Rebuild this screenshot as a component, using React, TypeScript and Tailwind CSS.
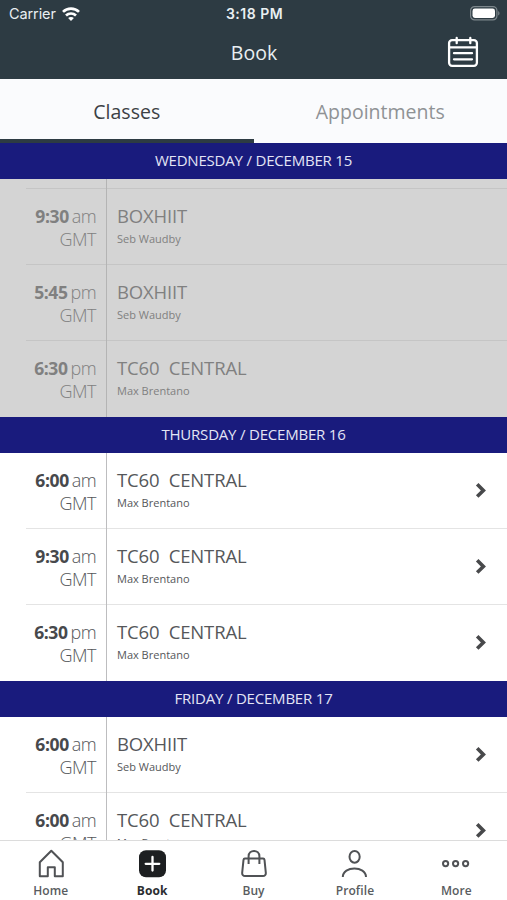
import * as React from 'react';
import { clsx } from 'clsx';

interface ClassItem {
  time: string;
  period: 'am' | 'pm';
  title: string;
  coach: string;
}

interface Day {
  label: string;
  past?: boolean;
  items: ClassItem[];
}

const DAYS: Day[] = [
  {
    label: 'WEDNESDAY / DECEMBER 15',
    past: true,
    items: [
      { time: '9:30', period: 'am', title: 'BOXHIIT', coach: 'Seb Waudby' },
      { time: '5:45', period: 'pm', title: 'BOXHIIT', coach: 'Seb Waudby' },
      { time: '6:30', period: 'pm', title: 'TC60  CENTRAL', coach: 'Max Brentano' },
    ],
  },
  {
    label: 'THURSDAY / DECEMBER 16',
    items: [
      { time: '6:00', period: 'am', title: 'TC60  CENTRAL', coach: 'Max Brentano' },
      { time: '9:30', period: 'am', title: 'TC60  CENTRAL', coach: 'Max Brentano' },
      { time: '6:30', period: 'pm', title: 'TC60  CENTRAL', coach: 'Max Brentano' },
    ],
  },
  {
    label: 'FRIDAY / DECEMBER 17',
    items: [
      { time: '6:00', period: 'am', title: 'BOXHIIT', coach: 'Seb Waudby' },
      { time: '6:00', period: 'am', title: 'TC60  CENTRAL', coach: 'Max Brentano' },
    ],
  },
];

const NAV = ['Home', 'Book', 'Buy', 'Profile', 'More'] as const;
type NavName = (typeof NAV)[number];

function WifiIcon() {
  return (
    <svg width="18" height="14" viewBox="0 0 18 14" fill="none" stroke="#fff" strokeWidth="2.7">
      <path d="M1 4.9C5.4.6 12.6.6 17 4.9" />
      <path d="M4 8.5c2.8-2.7 7.2-2.7 10 0" />
      <path d="M9 13.9 6.1 11c1.6-1.5 4.2-1.5 5.8 0z" fill="#fff" stroke="none" />
    </svg>
  );
}

function BatteryIcon() {
  return (
    <svg width="30" height="15" viewBox="0 0 30 15" fill="none">
      <rect x="0.6" y="0.6" width="26.3" height="13.3" rx="4" stroke="#7d878c" strokeWidth="1.2" />
      <rect x="2.5" y="2.5" width="22.5" height="9.5" rx="2.4" fill="#fff" />
      <path d="M28.2 5v4.6c1.8-.9 1.8-3.7 0-4.6z" fill="#7d878c" />
    </svg>
  );
}

function CalendarIcon() {
  return (
    <svg width="32" height="32" viewBox="0 0 32 32" fill="none" stroke="#fff" strokeWidth="2.3" strokeLinecap="round">
      <rect x="2.1" y="4.1" width="27.8" height="25.7" rx="3" />
      <path d="M2.1 11.3h27.8M9.7 2v5.2M23.3 2v5.2M7 17.2h18M7 23.3h18" />
    </svg>
  );
}

function NavIcon({ name }: { name: NavName }) {
  return (
    <svg
      width="30"
      height="30"
      viewBox="0 0 30 30"
      fill="none"
      stroke="#505255"
      strokeWidth="2"
      strokeLinejoin="round"
    >
      {name === 'Home' && <path d="M3.8 27.3V13.3L15.3 1.8l11.5 11.5v14h-8v-9.1h-7v9.1z" />}
      {name === 'Book' && (
        <>
          <rect x="2" y="1.3" width="27" height="27" rx="7" fill="#1d1f21" stroke="none" />
          <path d="M15.5 8v13.6M8.7 14.8h13.6" stroke="#fff" strokeWidth="2.3" strokeLinecap="round" />
        </>
      )}
      {name === 'Buy' && (
        <>
          <path d="M5.9 9.6h18.2c.8 0 1.3.5 1.4 1.2l1.3 12.9c.2 2-1 3.3-2.8 3.3H6c-1.8 0-3-1.3-2.8-3.3l1.3-12.9c.1-.7.6-1.2 1.4-1.2z" />
          <path d="M9.6 14.9V7.3c0-7.2 10.8-7.2 10.8 0v7.6" />
        </>
      )}
      {name === 'Profile' && (
        <>
          <ellipse cx="14.6" cy="7.8" rx="5.1" ry="5.9" />
          <path d="M2.8 28c0-11.4 23.2-11.4 23.2 0" />
        </>
      )}
      {name === 'More' && (
        <>
          <circle cx="4.6" cy="14.6" r="2.6" />
          <circle cx="14.6" cy="14.6" r="2.6" />
          <circle cx="24.6" cy="14.6" r="2.6" />
        </>
      )}
    </svg>
  );
}

function ClassRow({ item, past, last }: { item: ClassItem; past?: boolean; last: boolean }) {
  return (
    <div className={clsx('flex h-[75.8px] shrink-0', past ? 'text-[#808080]' : 'text-[#55575a]')}>
      <div className="w-[26px] shrink-0" />
      <div
        className={clsx(
          'flex flex-1 border-b',
          last ? 'border-transparent' : past ? 'border-[#c5c5c5]' : 'border-[#e4e4e4]'
        )}
      >
        <div
          className={clsx(
            '-mb-px flex w-[81px] shrink-0 flex-col items-end border-r pt-4 pr-[10px] text-[18px] leading-[23px]',
            past ? 'border-[#b4b4b4]' : 'border-[#bdbdbf]'
          )}
        >
          <div className="flex gap-[3px]">
            <span className={clsx('text-[17.5px] font-bold tracking-[-0.4px]', !past && 'text-[#47494c]')}>
              {item.time}
            </span>
            <span className="font-light tracking-[-0.6px]">{item.period}</span>
          </div>
          <span className="font-light tracking-[-0.5px]">GMT</span>
        </div>
        <div className="flex flex-1 flex-col pt-[15px] pl-[10px]">
          <span className="text-[18.5px] leading-[23px] tracking-[-0.15px] whitespace-pre">{item.title}</span>
          <span className="mt-px text-[11px] leading-[21px]">{item.coach}</span>
        </div>
        {!past && (
          <svg
            className="mt-[28px] mr-[19px]"
            width="14"
            height="18"
            viewBox="0 0 14 18"
            fill="none"
            stroke="#48494b"
            strokeWidth="3.6"
          >
            <path d="m3.2 3.2 6.2 6.2-6.2 6.2" />
          </svg>
        )}
      </div>
    </div>
  );
}

function DaySection({ day }: { day: Day }) {
  return (
    <section className={clsx('shrink-0', day.past ? 'bg-[#d4d4d4]' : 'bg-white')}>
      <h2 className="flex h-[36.6px] items-center justify-center bg-[#191b7d] pb-[1.5px] text-[15px] tracking-[-0.2px] text-[#e3e5f5]">
        {day.label}
      </h2>
      {day.past && (
        <div className="flex h-[10px] pl-[26px]">
          <div className="flex flex-1 border-b border-[#c5c5c5]">
            <div className="-mb-px w-[81px] border-r border-[#b4b4b4]" />
          </div>
        </div>
      )}
      {day.items.map((item, i) => (
        <ClassRow key={i} item={item} past={day.past} last={i === day.items.length - 1} />
      ))}
    </section>
  );
}

export default function App() {
  const [tab, setTab] = React.useState('Classes');
  const [active, setActive] = React.useState<NavName>('Book');

  return (
    <div className="flex h-[900px] w-[507px] flex-col overflow-hidden bg-white font-['Open_Sans',sans-serif]">
      <header className="h-[79px] shrink-0 bg-[#2d3b43] text-[#e9eff2]">
        <div className="grid h-[27px] grid-cols-3 items-center pr-[7px] pl-[9px] font-['Inter',sans-serif] text-[14.5px]">
          <div className="flex items-center gap-[6px]">
            <span className="tracking-[-0.1px]">Carrier</span>
            <WifiIcon />
          </div>
          <span className="text-center text-[14px] font-semibold tracking-[0.5px]">3:18 PM</span>
          <div className="flex justify-end">
            <BatteryIcon />
          </div>
        </div>
        <div className="grid h-[50px] grid-cols-3 items-center pr-7">
          <span />
          <h1 className="pt-0.5 pl-[29px] text-center text-[19.5px]">Book</h1>
          <button className="flex justify-end">
            <CalendarIcon />
          </button>
        </div>
      </header>

      <div className="flex h-[63.7px] shrink-0 bg-[#fafbfd] text-[19.5px]">
        {['Classes', 'Appointments'].map((name) => (
          <button
            key={name}
            onClick={() => setTab(name)}
            className={clsx(
              'flex-1 border-b-4 pt-[5px]',
              tab === name ? 'border-[#2d3b43] text-[#3c4145]' : 'border-transparent text-[#8f9295]'
            )}
          >
            {name}
          </button>
        ))}
      </div>

      <main className="flex min-h-0 flex-1 flex-col overflow-hidden">
        {DAYS.map((day) => (
          <DaySection key={day.label} day={day} />
        ))}
      </main>

      <nav className="flex h-[60px] shrink-0 border-t border-[#dcdcdc] bg-white">
        {NAV.map((name) => (
          <button
            key={name}
            onClick={() => setActive(name)}
            className={clsx(
              'flex flex-1 flex-col items-center pt-2 text-[12px] leading-4',
              active === name
                ? 'font-bold tracking-[0.1px] text-[#2b2d30]'
                : 'font-semibold tracking-[0.1px] text-[#595c60]'
            )}
          >
            <NavIcon name={name} />
            <span className="mt-1">{name}</span>
          </button>
        ))}
      </nav>
    </div>
  );
}
